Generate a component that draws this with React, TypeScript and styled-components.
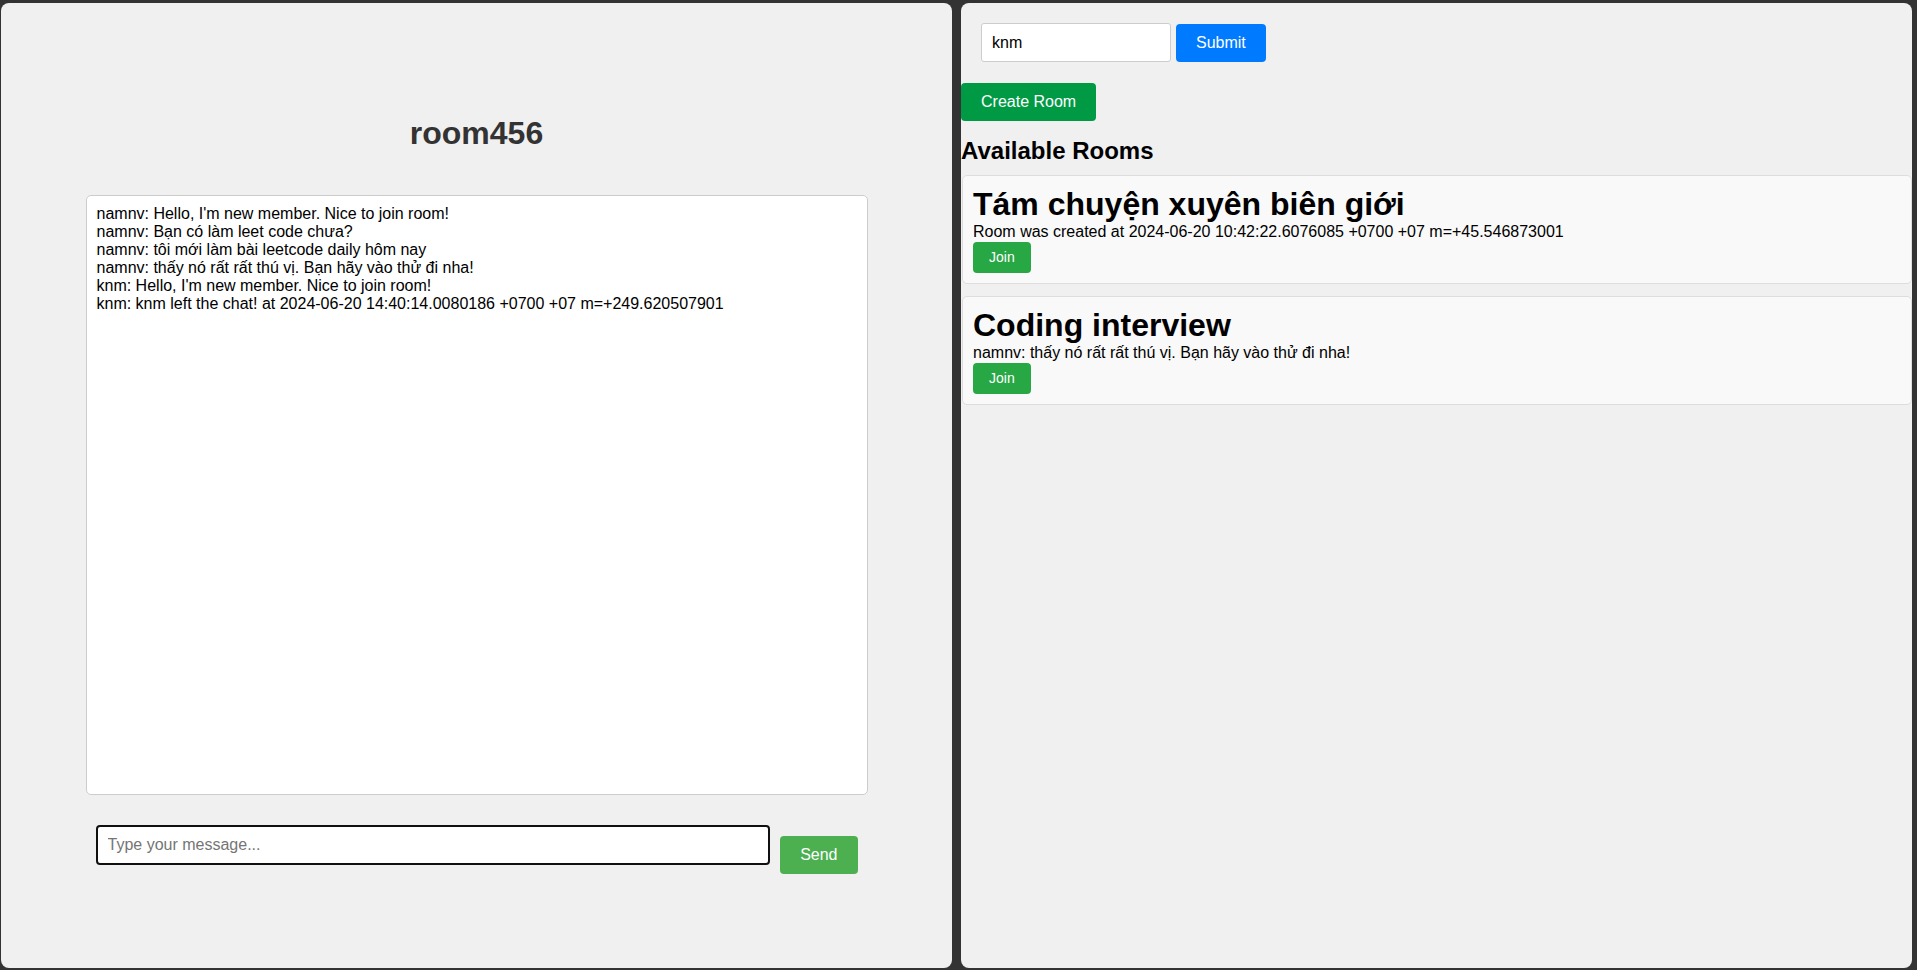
import React, { useState } from 'react';
import styled, { createGlobalStyle } from 'styled-components';

type Room = {
  id: string;
  name: string;
  info: string;
};

const initialMessages = [
  "namnv: Hello, I'm new member. Nice to join room!",
  'namnv: Bạn có làm leet code chưa?',
  'namnv: tôi mới làm bài leetcode daily hôm nay',
  'namnv: thấy nó rất rất thú vị. Bạn hãy vào thử đi nha!',
  "knm: Hello, I'm new member. Nice to join room!",
  'knm: knm left the chat! at 2024-06-20 14:40:14.0080186 +0700 +07 m=+249.620507901',
];

const rooms: Room[] = [
  {
    id: 'room123',
    name: 'Tám chuyện xuyên biên giới',
    info: 'Room was created at 2024-06-20 10:42:22.6076085 +0700 +07 m=+45.546873001',
  },
  {
    id: 'room456',
    name: 'Coding interview',
    info: 'namnv: thấy nó rất rất thú vị. Bạn hãy vào thử đi nha!',
  },
];

export default function App() {
  const [username, setUsername] = useState('knm');
  const [message, setMessage] = useState('');
  const [messages, setMessages] = useState(initialMessages);

  const sendMessage = () => {
    if (!message.trim()) return;
    setMessages([...messages, `${username}: ${message}`]);
    setMessage('');
  };

  return (
    <>
      <GlobalStyle />
      <Layout>
        <ChatPanel>
          <RoomTitle>room456</RoomTitle>
          <ChatBox>
            {messages.map((m, i) => (
              <MessageLine key={i}>{m}</MessageLine>
            ))}
          </ChatBox>
          <InputRow>
            <MessageInput
              placeholder="Type your message..."
              value={message}
              onChange={(e) => setMessage(e.target.value)}
              onKeyDown={(e) => e.key === 'Enter' && sendMessage()}
            />
            <SendButton onClick={sendMessage}>Send</SendButton>
          </InputRow>
        </ChatPanel>

        <RoomsPanel>
          <UserForm onSubmit={(e) => e.preventDefault()}>
            <UsernameInput
              value={username}
              onChange={(e) => setUsername(e.target.value)}
            />
            <SubmitButton type="submit">Submit</SubmitButton>
          </UserForm>
          <CreateButton>Create Room</CreateButton>
          <SectionTitle>Available Rooms</SectionTitle>
          <RoomList>
            {rooms.map((room) => (
              <RoomCard key={room.id}>
                <RoomName>{room.name}</RoomName>
                <RoomInfo>{room.info}</RoomInfo>
                <JoinButton>Join</JoinButton>
              </RoomCard>
            ))}
          </RoomList>
        </RoomsPanel>
      </Layout>
    </>
  );
}

const GlobalStyle = createGlobalStyle`
  html, body {
    margin: 0;
    padding: 0;
    background-color: #333333;
    font-family: "Liberation Sans", Arial, sans-serif;
  }

  * {
    box-sizing: border-box;
  }
`;

const Layout = styled.div`
  display: flex;
  gap: 9px;
  height: 100vh;
  padding: 3px 5px 2px 1px;
`;

const Panel = styled.div`
  flex: 1;
  display: flex;
  flex-direction: column;
  background-color: #f0f0f0;
  border-radius: 8px;
  overflow: hidden;
`;

const ChatPanel = styled(Panel)`
  align-items: center;
  padding-top: 112px;
`;

const RoomTitle = styled.h1`
  margin: 0;
  font-size: 32px;
  line-height: 37px;
  font-weight: bold;
  color: #333333;
`;

const ChatBox = styled.div`
  margin-top: 43px;
  width: 782px;
  height: 600px;
  padding: 9px 10px;
  overflow-y: auto;

  background-color: #ffffff;
  border: 1px solid #cccccc;
  border-radius: 5px;
`;

const MessageLine = styled.div`
  font-size: 16px;
  line-height: 18px;
  color: #000000;
`;

const InputRow = styled.div`
  margin-top: 30px;
  width: 782px;
  padding: 0 10px;

  display: flex;
  align-items: flex-start;
  gap: 10px;
`;

const MessageInput = styled.input`
  flex: 1;
  height: 40px;
  padding: 0 10px;

  font-family: inherit;
  font-size: 16px;
  background-color: #ffffff;
  border: 2px solid #101010;
  border-radius: 4px;
  outline: none;

  &::placeholder {
    color: #757575;
  }
`;

const Button = styled.button<{ $bg: string }>`
  border: none;
  border-radius: 4px;
  padding: 10px 20px;

  font-family: inherit;
  font-size: 16px;
  line-height: 18px;
  color: #ffffff;
  background-color: ${({ $bg }) => $bg};
  cursor: pointer;
`;

const SendButton = styled(Button).attrs({ $bg: '#4caf50' })`
  margin-top: 11px;
`;

const RoomsPanel = styled(Panel)`
  align-items: stretch;
`;

const UserForm = styled.form`
  margin: 20px 20px 21px;
  display: flex;
  align-items: center;
  gap: 5px;
`;

const UsernameInput = styled.input`
  width: 190px;
  height: 39px;
  padding: 0 10px;

  font-family: inherit;
  font-size: 16px;
  color: #000000;
  background-color: #ffffff;
  border: 1px solid #cccccc;
  border-radius: 3px;
  outline: none;
`;

const SubmitButton = styled(Button).attrs({ $bg: '#007bff' })``;

const CreateButton = styled(Button).attrs({ $bg: '#009a44' })`
  align-self: flex-start;
`;

const SectionTitle = styled.h2`
  margin: 16px 0 10px;
  font-size: 24px;
  line-height: 28px;
  font-weight: bold;
  color: #000000;
`;

const RoomList = styled.div`
  display: flex;
  flex-direction: column;
  gap: 12px;
  padding-left: 1px;
`;

const RoomCard = styled.div`
  display: flex;
  flex-direction: column;
  align-items: flex-start;
  padding: 10px;

  background-color: #f9f9f9;
  border: 1px solid #dddddd;
  border-radius: 5px;
`;

const RoomName = styled.h1`
  margin: 0;
  font-size: 32px;
  line-height: 37px;
  font-weight: bold;
  color: #000000;
`;

const RoomInfo = styled.p`
  margin: 0;
  font-size: 16px;
  line-height: 18px;
  color: #000000;
`;

const JoinButton = styled(Button).attrs({ $bg: '#28a745' })`
  margin-top: 1px;
  padding: 7px 16px;
  font-size: 14px;
  line-height: 17px;
`;
